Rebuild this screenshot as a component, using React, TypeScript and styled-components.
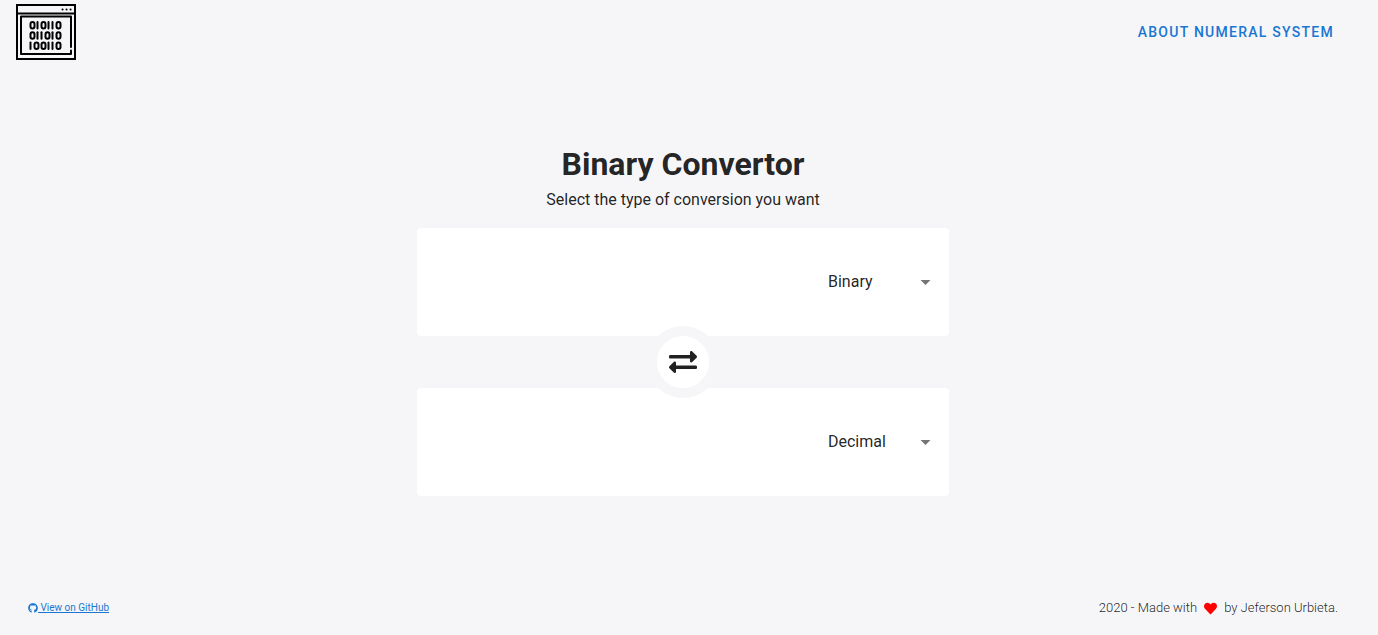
import React, { useState } from "react";
import styled, { createGlobalStyle } from "styled-components";
import { FaExchangeAlt, FaGithub, FaHeart } from "react-icons/fa";

const GlobalStyle = createGlobalStyle`
  *, *::before, *::after { box-sizing: border-box; }
  body {
    margin: 0;
    background: #f6f6f9;
    color: rgba(0, 0, 0, 0.87);
    font-family: Roboto, sans-serif;
    font-size: 16px;
    line-height: 24px;
  }
`;

const Page = styled.div`
  min-height: 100vh;
  padding-right: 12px;
  display: flex;
  flex-direction: column;
`;

const Header = styled.header`
  display: flex;
  align-items: center;
  justify-content: space-between;
  height: 64px;
  padding: 0 16px;
`;

const HomeLink = styled.a`
  display: flex;
  color: #000;
`;

const NavLink = styled.a`
  padding: 8px 16px;
  color: #1976d2;
  font-size: 14px;
  font-weight: 500;
  line-height: 20px;
  letter-spacing: 0.09em;
  text-decoration: none;
  text-transform: uppercase;
`;

const Main = styled.main`
  flex: 1;
  display: flex;
  flex-direction: column;
  align-items: center;
  justify-content: center;
  padding: 0 12px 10px;
`;

const Title = styled.h1`
  margin: 0;
  font-size: 32px;
  font-weight: 700;
  line-height: 48px;
`;

const Subtitle = styled.p`
  margin: 0 0 16px;
`;

const Converter = styled.form`
  width: 100%;
  max-width: 532px;
  display: flex;
  flex-direction: column;
  align-items: center;
`;

const Card = styled.section`
  width: 100%;
  height: 108px;
  display: flex;
  align-items: center;
  padding: 0 12px;
  border-radius: 4px;
  background: #fff;
`;

const NumberInput = styled.input`
  flex: 1;
  min-width: 0;
  height: 48px;
  padding: 0 12px;
  border: 0;
  outline: 0;
  background: transparent;
  color: inherit;
  font: inherit;
`;

const SelectField = styled.div`
  display: grid;
  align-items: center;
  width: 109px;
  > * { grid-area: 1 / 1; }
`;

const Select = styled.select`
  width: 100%;
  height: 32px;
  padding: 0;
  border: 0;
  outline: 0;
  appearance: none;
  background: transparent;
  color: inherit;
  font: inherit;
`;

const Caret = styled.svg`
  justify-self: end;
  width: 24px;
  height: 24px;
  fill: rgba(0, 0, 0, 0.54);
  pointer-events: none;
`;

const SwapButton = styled.button`
  z-index: 1;
  display: flex;
  align-items: center;
  justify-content: center;
  width: 72px;
  height: 72px;
  margin: -10px 0;
  padding: 0;
  border: 10px solid #f6f6f9;
  border-radius: 50%;
  background: #fff;
  color: rgba(0, 0, 0, 0.87);
  cursor: pointer;
`;

const Footer = styled.footer`
  display: flex;
  align-items: center;
  justify-content: space-between;
  height: 54px;
  padding: 0 28px;
`;

const GithubLink = styled.a`
  color: #1976d2;
  font-size: 10px;
  line-height: 20px;
  svg { vertical-align: middle; }
`;

const Credit = styled.p`
  display: flex;
  align-items: center;
  gap: 7px;
  margin: 0;
  font-size: 13px;
  font-weight: 300;
  svg { color: #f00; }
`;

const bitRows = ["010110", "011010", "100110"];

function Bits({ row, y }: { row: string; y: number }) {
  let x = 13.5;
  return (
    <>
      {row.split("").map((bit, i) => {
        const left = x;
        x += bit === "0" ? 7 : 4;
        return bit === "0" ? (
          <rect key={i} x={left + 1} y={y + 0.5} width="4" height="6.5" rx="2" />
        ) : (
          <line key={i} x1={left + 1} x2={left + 1} y1={y + 0.5} y2={y + 7} />
        );
      })}
    </>
  );
}

function Logo() {
  return (
    <svg
      width="60"
      height="56"
      viewBox="0 0 60 56"
      fill="none"
      stroke="currentColor"
      strokeWidth="2"
      strokeLinecap="round"
      strokeLinejoin="round"
    >
      <rect x="1" y="1" width="58" height="54" strokeLinejoin="miter" />
      <path d="M1 9.5H59" />
      <path d="M55 43V12.5H5V50H55V46.5" />
      <path d="M46.5 5.5h.1M50.5 5.5h.1M54.5 5.5h.1" />
      {bitRows.map((row, i) => (
        <Bits key={row} row={row} y={17.5 + i * 10.3} />
      ))}
    </svg>
  );
}

const systems = ["Binary", "Decimal", "Octal", "Hexadecimal"];

type PanelProps = { name: string; system: string; onSystem: (value: string) => void };

function Panel({ name, system, onSystem }: PanelProps) {
  return (
    <Card>
      <NumberInput aria-label={`${name} number`} autoComplete="off" />
      <SelectField>
        <Select aria-label={`${name} system`} value={system} onChange={(e) => onSystem(e.target.value)}>
          {systems.map((s) => (
            <option key={s}>{s}</option>
          ))}
        </Select>
        <Caret viewBox="0 0 24 24" aria-hidden="true">
          <path d="M7.5 10l5 5 5-5H7.5Z" />
        </Caret>
      </SelectField>
    </Card>
  );
}

export default function App() {
  const [from, setFrom] = useState("Binary");
  const [to, setTo] = useState("Decimal");

  const swap = () => {
    setFrom(to);
    setTo(from);
  };

  return (
    <Page>
      <GlobalStyle />
      <Header>
        <HomeLink href="#" aria-label="Home">
          <Logo />
        </HomeLink>
        <NavLink href="#about">About numeral system</NavLink>
      </Header>
      <Main>
        <Title>Binary Convertor</Title>
        <Subtitle>Select the type of conversion you want</Subtitle>
        <Converter onSubmit={(e) => e.preventDefault()}>
          <Panel name="Source" system={from} onSystem={setFrom} />
          <SwapButton type="button" aria-label="Swap systems" onClick={swap}>
            <FaExchangeAlt size={28} />
          </SwapButton>
          <Panel name="Result" system={to} onSystem={setTo} />
        </Converter>
      </Main>
      <Footer>
        <GithubLink href="#github">
          <FaGithub size={10} /> View on GitHub
        </GithubLink>
        <Credit>
          2020 - Made with <FaHeart size={13} /> by Jeferson Urbieta.
        </Credit>
      </Footer>
    </Page>
  );
}
